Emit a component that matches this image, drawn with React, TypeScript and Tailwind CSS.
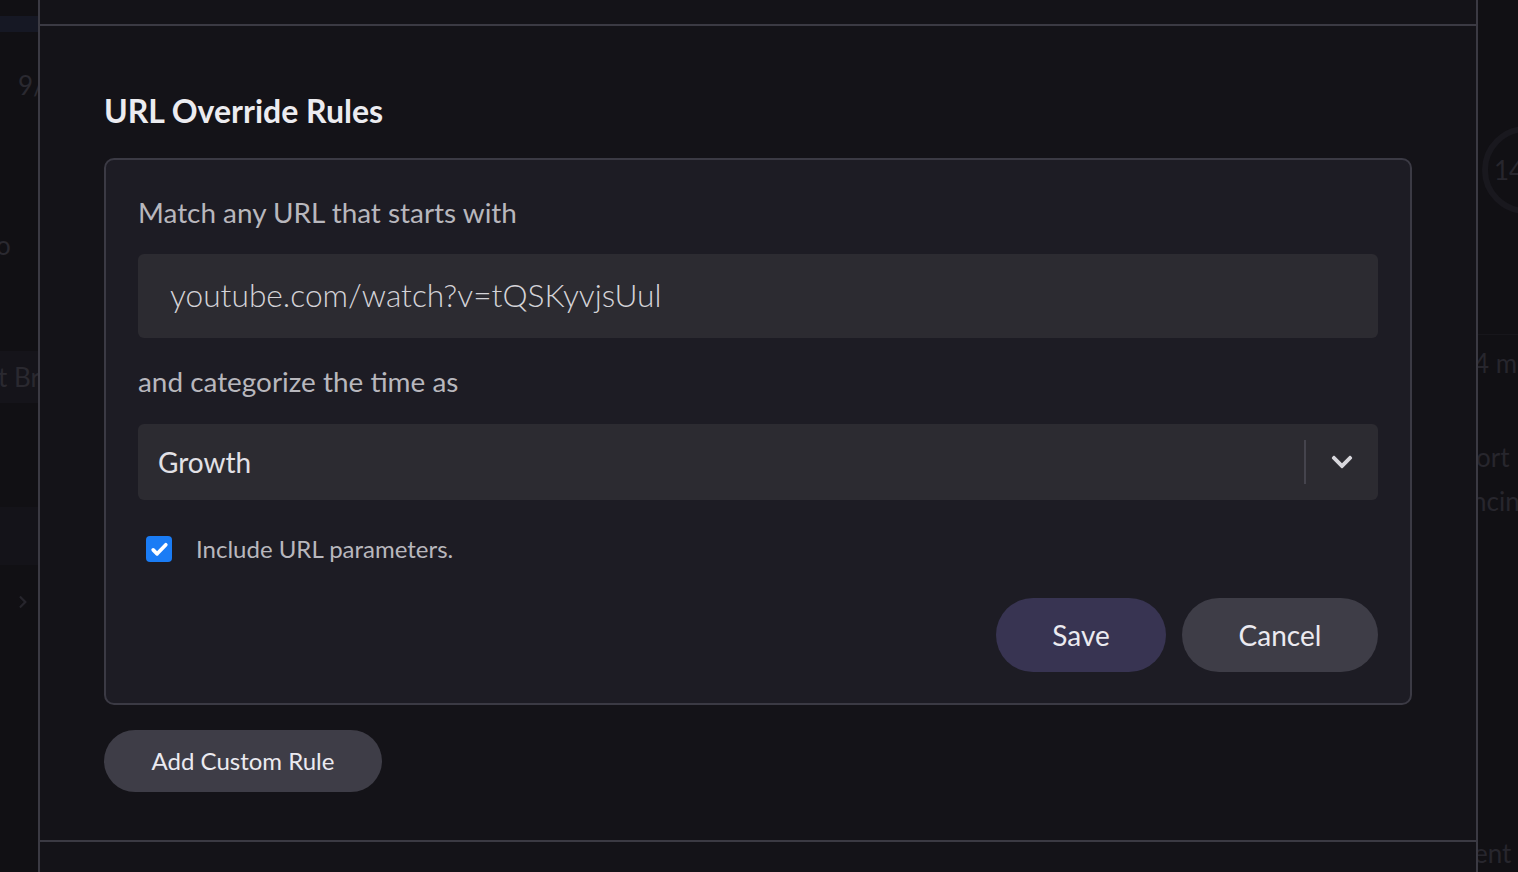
import React, { useState } from "react";
import { FaChevronDown, FaChevronRight } from "react-icons/fa";

export default function App(): React.ReactElement {
  const [includeParams, setIncludeParams] = useState(true);

  return (
    <div
      className="flex h-[872px] w-[1518px] overflow-hidden bg-[#111014] text-white"
      style={{ fontFamily: "Lato, 'Noto Sans', sans-serif" }}
    >
      {/* dimmed page behind, left */}
      <div className="flex w-[38px] shrink-0 flex-col overflow-hidden text-[#2a2930]">
        <div className="mt-[16px] h-[16px] bg-[#161824]" />
        <div className="mt-[37px] pl-[18px] text-[26px] leading-[32px]">9/</div>
        <div className="mt-[128px] -ml-[4px] text-[26px] leading-[32px]">o</div>
        <div className="mt-[90px] flex h-[52px] items-center bg-[#15141a] text-[26px] -ml-[2px] whitespace-nowrap">
          t Br
        </div>
        <div className="mt-[104px] h-[58px] bg-[#141319]" />
        <div className="mt-[30px] pl-[16px] text-[#26252c]">
          <FaChevronRight size={14} />
        </div>
      </div>

      {/* modal panel */}
      <div className="flex w-[1440px] shrink-0 flex-col border-x-2 border-[#3b3a43] bg-[#141318]">
        <div className="h-[26px] shrink-0 border-b-2 border-[#3b3a43]" />

        <div className="flex flex-col px-[64px]">
          <h2 className="mt-[67px] text-[32px] font-bold leading-[36px] text-[#ececf0]">
            URL Override Rules
          </h2>

          <div className="mt-[29px] rounded-[10px] border-2 border-[#3b3a44] bg-[#1d1c24] px-[32px] pt-[36px] pb-[31px]">
            <div className="text-[27.9px] leading-[32px] text-[#b8b7bd]">
              Match any URL that starts with
            </div>
            <div className="mt-[26px] flex h-[84px] items-center rounded-[6px] bg-[#2c2b31] px-[32px] text-[31.7px] font-light text-[#d4d3d8]">
              youtube.com/watch?v=tQSKyvjsUul
            </div>

            <div className="mt-[27px] text-[27.9px] leading-[32px] text-[#b8b7bd]">
              and categorize the time as
            </div>
            <div className="mt-[27px] flex h-[76px] items-center rounded-[6px] bg-[#2c2b31] pl-[20px]">
              <span className="flex-1 text-[28px] text-[#e2e1e6]">Growth</span>
              <div className="h-[44px] w-[2px] bg-[#45444d]" />
              <div className="flex w-[72px] items-center justify-center text-[#d8d7dc]">
                <FaChevronDown size={24} />
              </div>
            </div>

            <label className="mt-[31px] flex items-center pl-[8px]">
              <button
                type="button"
                onClick={() => setIncludeParams(!includeParams)}
                className={
                  includeParams
                    ? "flex h-[26px] w-[26px] items-center justify-center rounded-[4px] bg-[#1a7cf5]"
                    : "flex h-[26px] w-[26px] items-center justify-center rounded-[4px] border-2 border-[#55545c]"
                }
              >
                {includeParams && (
                  <svg width="19" height="19" viewBox="0 0 24 24" fill="none">
                    <path
                      d="M4 12.5l5 5L20 6"
                      stroke="white"
                      strokeWidth="4.6"
                      strokeLinecap="round"
                      strokeLinejoin="round"
                    />
                  </svg>
                )}
              </button>
              <span className="ml-[24px] text-[24px] text-[#b8b7bd]">
                Include URL parameters.
              </span>
            </label>

            <div className="mt-[31px] flex justify-end gap-[16px]">
              <button className="h-[74px] w-[170px] rounded-full bg-[#383452] text-[28px] text-[#ebeaf0]">
                Save
              </button>
              <button className="h-[74px] w-[196px] rounded-full bg-[#3e3d47] text-[28px] text-[#ebeaf0]">
                Cancel
              </button>
            </div>
          </div>

          <button className="mt-[25px] h-[62px] w-[278px] rounded-full bg-[#3e3d47] text-[24px] text-[#ebeaf0]">
            Add Custom Rule
          </button>
        </div>

        <div className="mt-auto h-[32px] shrink-0 border-t-2 border-[#3b3a43]" />
      </div>

      {/* dimmed page behind, right */}
      <div className="flex w-[40px] shrink-0 flex-col overflow-hidden whitespace-nowrap text-[26px] text-[#27262d]">
        <div className="mt-[126px] ml-[4px] flex h-[88px] w-[88px] items-center rounded-full border-[6px] border-[#19181e] pl-[6px]">
          14
        </div>
        <div className="mt-[120px] h-[1px] bg-[#17161b]" />
        <div className="mt-[12px] -ml-[4px] leading-[32px]">4 mi</div>
        <div className="mt-[62px] -ml-[2px] leading-[32px]">ort</div>
        <div className="mt-[12px] -ml-[6px] leading-[32px]">ncin</div>
        <div className="mt-[320px] -ml-[4px] leading-[32px]">ent</div>
      </div>
    </div>
  );
}
